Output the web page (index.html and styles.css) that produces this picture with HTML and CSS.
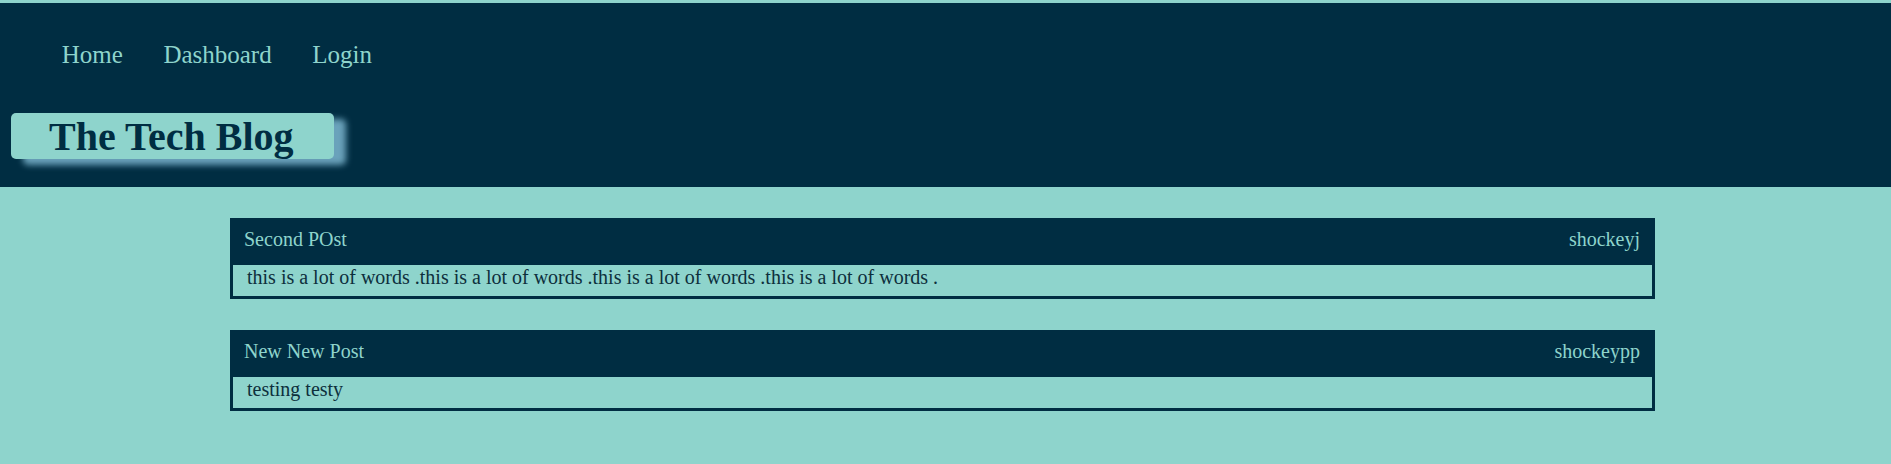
FILE: index.html
```html
<!DOCTYPE html>
<html lang="en">
<head>
<meta charset="utf-8">
<title>The Tech Blog</title>
<link rel="stylesheet" href="styles.css">
</head>
<body>
<header class="site-header">
  <nav class="nav">
    <a class="nav-link" href="#">Home</a>
    <a class="nav-link" href="#">Dashboard</a>
    <a class="nav-link" href="#">Login</a>
  </nav>
  <h1 class="brand">The Tech Blog</h1>
</header>
<main class="posts">
  <article class="post">
    <div class="post-head">
      <a class="post-title" href="#">Second POst</a>
      <span class="post-author">shockeyj</span>
    </div>
    <div class="post-body">this is a lot of words .this is a lot of words .this is a lot of words .this is a lot of words .</div>
  </article>
  <article class="post">
    <div class="post-head">
      <a class="post-title" href="#">New New Post</a>
      <span class="post-author">shockeypp</span>
    </div>
    <div class="post-body">testing testy</div>
  </article>
</main>
</body>
</html>
```
FILE: styles.css
```css
* { box-sizing: border-box; }
html, body { margin: 0; padding: 0; }
body {
  background: #8ed4cc;
  font-family: "Liberation Serif", "Times New Roman", serif;
  color: #002d42;
  padding-top: 3px;
}
.site-header {
  background: #002d42;
  padding: 37px 0 28px 11px;
}
.nav {
  display: flex;
  gap: 40.6px;
  padding-left: 50.7px;
  font-size: 25px;
  line-height: 29px;
}
.nav-link {
  color: #8ed4cc;
  text-decoration: none;
}
.brand {
  display: inline-block;
  margin: 44px 0 0 0;
  background: #8ed4cc;
  color: #002d42;
  font-size: 40px;
  line-height: 44px;
  font-weight: bold;
  padding: 2px 40px 0 38px;
  border-radius: 5px;
  box-shadow: 12px 6px 6px #6aa2bb;
}
.posts {
  padding: 31px 0 0 230px;
}
.post {
  width: 1425px;
  border: 3px solid #002d42;
  margin-bottom: 31px;
}
.post-head {
  background: #002d42;
  display: flex;
  justify-content: space-between;
  padding: 7px 12px 14px 11px;
  font-size: 20px;
  line-height: 23px;
}
.post-title { color: #8ed4cc; text-decoration: none; }
.post-author { color: #8ed4cc; }
.post-body {
  font-size: 20px;
  line-height: 23px;
  padding: 1px 0 7px 14px;
  color: #0d2f3c;
}
```
